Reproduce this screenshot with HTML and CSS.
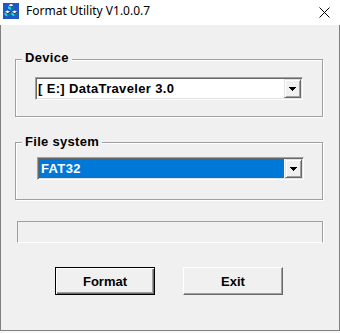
FILE: index.html
```html
<!DOCTYPE html>
<html lang="en">

<head>
    <meta charset="UTF-8">
    <meta name="viewport" content="width=device-width, initial-scale=1.0">
    <link rel="stylesheet" href="styles.css">
</head>

<body>
    <div class="window">
        <div class="titlebar">
            <svg class="app-icon" width="16" height="16" viewBox="0 0 16 16">
                <rect width="16" height="16" fill="#1f56c9"/>
                <g id="cube">
                    <polygon points="8,1 11,2.5 8,4 5,2.5" fill="#ffffff"/>
                    <polygon points="5,2.5 8,4 8,7 5,5.5" fill="#22d8ec"/>
                    <polygon points="8,4 11,2.5 11,5.5 8,7" fill="#0b7f95"/>
                    <polyline points="5,2.5 8,4 11,2.5 M8,4 8,7" fill="none" stroke="#000" stroke-width="0.6"/>
                </g>
                <use href="#cube" x="-3.5" y="6.5"/>
                <use href="#cube" x="3.5" y="6.5"/>
            </svg>
            <span class="title">Format Utility V1.0.0.7</span>
            <svg class="close" width="11" height="11" viewBox="0 0 11 11">
                <path d="M0.5 0.5 L10.5 10.5 M10.5 0.5 L0.5 10.5" stroke="#000" stroke-width="1" fill="none"/>
            </svg>
        </div>

        <div class="client">
            <div class="group group-device">
                <div class="group-title">Device</div>
                <div class="combo combo-device">
                    <div class="combo-field">[ E:] DataTraveler 3.0</div>
                    <div class="combo-btn">
                        <svg width="7" height="4" viewBox="0 0 7 4">
                            <path d="M0 0h7v1H0z M1 1h5v1H1z M2 2h3v1H2z M3 3h1v1H3z" fill="#000"/>
                        </svg>
                    </div>
                </div>
            </div>

            <div class="group group-fs">
                <div class="group-title">File system</div>
                <div class="combo combo-fs">
                    <div class="combo-field selected">FAT32</div>
                    <div class="combo-btn">
                        <svg width="7" height="4" viewBox="0 0 7 4">
                            <path d="M0 0h7v1H0z M1 1h5v1H1z M2 2h3v1H2z M3 3h1v1H3z" fill="#000"/>
                        </svg>
                    </div>
                </div>
            </div>

            <div class="progress"></div>

            <div class="buttons">
                <button class="btn btn-default">Format</button>
                <button class="btn">Exit</button>
            </div>
        </div>
    </div>
</body>

</html>
```

FILE: styles.css
```css
* {
    box-sizing: border-box;
}

body {
    margin: 0;
    background-color: #f7f7f7;
    font-family: "Liberation Sans", Arial, sans-serif;
}

.window {
    width: 340px;
}

.titlebar {
    display: flex;
    align-items: flex-start;
    height: 25px;
    padding: 3px 0 0 3px;
    background-color: #ffffff;
}

.app-icon {
    display: block;
    flex: none;
}

.title {
    margin-left: 7px;
    font-family: "Noto Sans", sans-serif;
    font-size: 12px;
    line-height: 16px;
    color: #000;
}

.close {
    display: block;
    margin: 4px 10px 0 auto;
}

.client {
    height: 306px;
    padding: 34px 16px 0 14px;
    background-color: #f0f0f0;
    border: 1px solid #808080;
    border-top: none;
}

/* group boxes */
.group {
    border: 1px solid #a0a0a0;
    box-shadow: 1px 1px 0 #ffffff, inset 1px 1px 0 #ffffff;
}

.group-title {
    width: fit-content;
    margin: -10px 0 0 6px;
    padding: 0 3px;
    background-color: #f0f0f0;
    font-size: 13px;
    font-weight: bold;
    line-height: 15px;
    letter-spacing: 0.3px;
    color: #000;
}

.group-device {
    padding-bottom: 16px;
}

.group-fs {
    margin-top: 25px;
    padding-bottom: 19px;
}

.group-fs .group-title {
    margin-top: -9px;
}

/* combo boxes */
.combo {
    display: flex;
    height: 23px;
    border: 1px solid;
    border-color: #a0a0a0 #ffffff #ffffff #a0a0a0;
    box-shadow: inset 1px 1px 0 #696969, inset -1px -1px 0 #e3e3e3;
    background-color: #ffffff;
    padding: 1px;
}

.combo-device {
    margin: 12px 19px 0 19px;
}

.combo-fs {
    margin: 8px 18px 0 21px;
}

.combo-field {
    flex: 1;
    display: flex;
    align-items: center;
    padding-left: 1px;
    font-size: 13px;
    font-weight: bold;
    line-height: 15px;
    letter-spacing: 0.35px;
    color: #000;
}

.combo-field.selected {
    padding-left: 2px;
    background-color: #0078d7;
    color: #ffffff;
}

.combo-btn {
    width: 17px;
    display: flex;
    align-items: center;
    justify-content: center;
    background-color: #f0f0f0;
    border: 1px solid;
    border-color: #e3e3e3 #696969 #696969 #e3e3e3;
    box-shadow: inset 1px 1px 0 #ffffff, inset -1px -1px 0 #a0a0a0;
}

.combo-fs .combo-btn {
    margin-left: 1px;
}

.combo-btn svg {
    display: block;
}

/* progress */
.progress {
    height: 22px;
    margin: 21px 0 0 2px;
    border: 1px solid;
    border-color: #a0a0a0 #a0a0a0 #ffffff #a0a0a0;
    box-shadow: 1px 0 0 #ffffff;
}

/* buttons */
.buttons {
    display: flex;
    gap: 28px;
    margin: 24px 0 0 40px;
}

.btn {
    width: 100px;
    height: 28px;
    padding: 0;
    background-color: #f0f0f0;
    border: 1px solid;
    border-color: #ffffff #696969 #696969 #ffffff;
    box-shadow: inset -1px -1px 0 #a0a0a0;
    font-family: "Liberation Sans", Arial, sans-serif;
    font-size: 13px;
    font-weight: bold;
    line-height: 15px;
    color: #000;
}

.btn-default {
    border-color: #000;
    box-shadow: inset 1px 1px 0 #ffffff, inset -1px -1px 0 #696969, inset -2px -2px 0 #a0a0a0;
}
```
